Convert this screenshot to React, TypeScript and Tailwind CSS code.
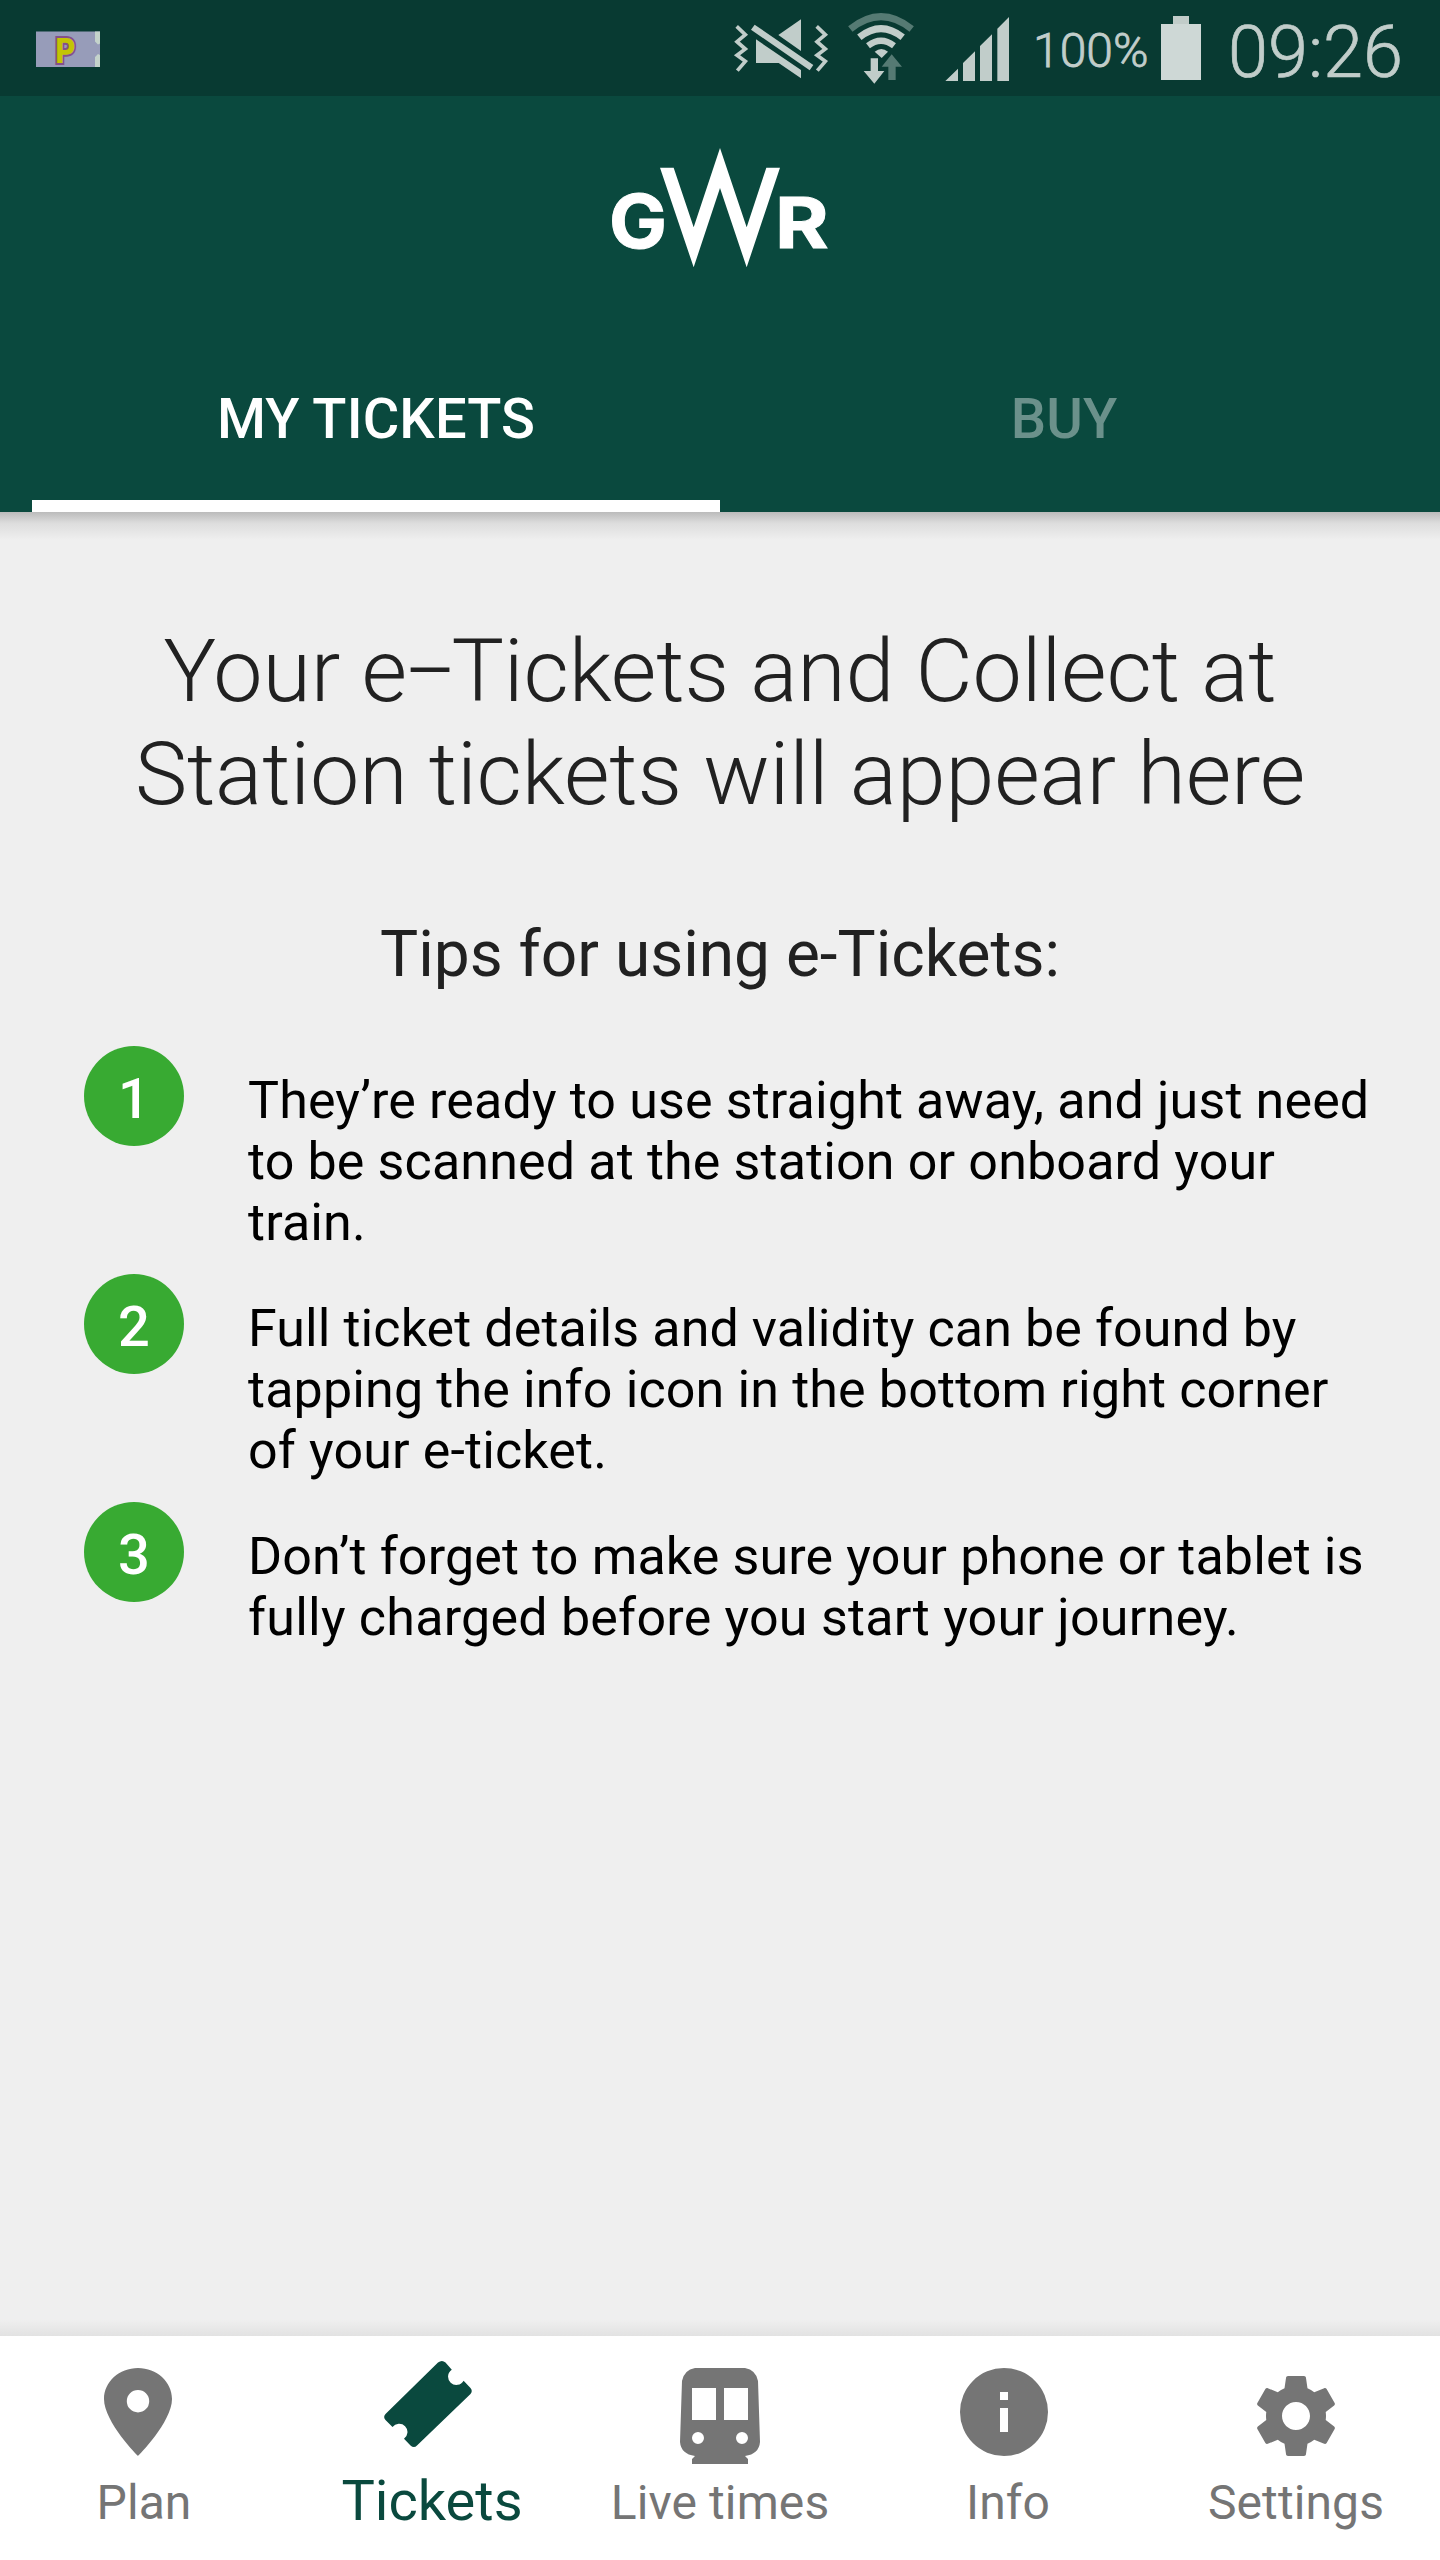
import type { ReactNode } from "react";

const GEAR =
  "M19.43 12.98c.04-.32.07-.64.07-.98s-.03-.66-.07-.98l2.11-1.65c.19-.15.24-.42.12-.64l-2-3.46c-.12-.22-.39-.3-.61-.22l-2.49 1c-.52-.4-1.08-.73-1.69-.98l-.38-2.65C14.46 2.18 14.25 2 14 2h-4c-.25 0-.46.18-.49.42l-.38 2.65c-.61.25-1.17.59-1.69.98l-2.49-1c-.23-.09-.49 0-.61.22l-2 3.46c-.13.22-.07.49.12.64l2.11 1.65c-.04.32-.07.65-.07.98s.03.66.07.98l-2.11 1.65c-.19.15-.24.42-.12.64l2 3.46c.12.22.39.3.61.22l2.49-1c.52.4 1.08.73 1.69.98l.38 2.65c.03.24.24.42.49.42h4c.25 0 .46-.18.49-.42l.38-2.65c.61-.25 1.17-.59 1.69-.98l2.49 1c.23.09.49 0 .61-.22l2-3.46c.12-.22.07-.49-.12-.64l-2.11-1.65zM12 15.5c-1.93 0-3.5-1.57-3.5-3.5s1.57-3.5 3.5-3.5 3.5 1.57 3.5 3.5-1.57 3.5-3.5 3.5z";

function StatusBar() {
  return (
    <div className="flex h-24 w-full shrink-0 bg-[#083a32] text-[#c1cdca]">
      <svg className="ml-9 h-24 w-16 shrink-0" viewBox="36 0 64 96">
        <rect x="36" y="31.5" width="64" height="35.5" fill="#979cb9" />
        <path d="M95 31.5h5v12l-2 1-3-3zM95 67h5V55l-2-1-3 3z" fill="#c4d3cb" />
        <text
          x="54.5"
          y="62.500"
          fontFamily="DejaVu Sans"
          fontWeight="700"
          fontSize="33"
          textLength="21"
          lengthAdjust="spacingAndGlyphs"
          fill="#c3c404"
          stroke="#84508a"
          strokeWidth="4"
          paintOrder="stroke"
        >
          P
        </text>
      </svg>
      <svg className="ml-[632px] h-24 w-[100px] shrink-0" viewBox="36 0 300 288" fill="currentColor">
        <path d="M50 79L76 104L51 125L76 147L51 166L76 184L52 212" fill="none" stroke="currentColor" strokeWidth="11" />
        <path d="M290 79L316 104L291 125L316 147L291 166L316 184L292 212" fill="none" stroke="currentColor" strokeWidth="11" />
        <path d="M104 74L280 195L269 211L93 89zM243 58V153L175 105zM108 118L243 210V235L176 189H108z" />
      </svg>
      <svg className="ml-[13px] h-24 w-[72px] shrink-0" viewBox="375 0 216 288" fill="none" stroke="currentColor">
        <path d="M391 87Q483 13 575 87" stroke="#557a73" strokeWidth="21" />
        <path d="M418 112Q483 60 548 112" strokeWidth="21" />
        <path d="M444 137Q483 107 522 137" strokeWidth="19" />
        <path d="M464 155Q484 139 504 155L485 174z" fill="currentColor" stroke="none" />
        <path d="M515 163L546 200H527V240H505V200H485z" fill="#557a73" stroke="none" />
        <path d="M452 175H474V213H493L463 251L431 213H452z" fill="currentColor" stroke="none" />
      </svg>
      <svg className="ml-[27px] h-24 w-[66px] shrink-0" viewBox="672 0 198 288" fill="currentColor">
        <path d="M676 243L714 206V243zM729 243V189L765 154V243zM780 243V138L816 103V243zM832 243V86L867 51V243z" />
      </svg>
      <div className="ml-[23px] w-[128px] shrink-0 pt-[21px] text-[48px] leading-[60px] font-light whitespace-nowrap [-webkit-text-stroke:0.8px_#c1cdca]">
        100%
      </div>
      <div className="flex w-10 shrink-0 flex-col items-center pt-4">
        <div className="h-2 w-4 bg-[#c1ccc9]" />
        <div className="h-14 w-10 bg-[#ced8d6]" />
      </div>
      <div className="ml-[27px] shrink-0 pt-[11px] text-[72px] leading-[84px] font-light whitespace-nowrap [-webkit-text-stroke:0.7px_#c1cdca]">
        09:26
      </div>
    </div>
  );
}

function Logo() {
  return (
    <svg className="h-[150px] w-[260px]" viewBox="0 0 780 450" fill="#fff" role="img" aria-label="GWR">
      <text
        x="57"
        y="353"
        fontFamily="Inter"
        fontWeight="700"
        fontSize="223"
        textLength="174"
        lengthAdjust="spacingAndGlyphs"
        stroke="#fff"
        strokeWidth="3"
      >
        G
      </text>
      <path d="M210 113H251L311 292L390 54L470 292L529 113H570L470 412L390 174L311 412z" />
      <text
        x="555"
        y="353"
        fontFamily="Inter"
        fontWeight="700"
        fontSize="212"
        textLength="161"
        lengthAdjust="spacingAndGlyphs"
        stroke="#fff"
        strokeWidth="3"
      >
        R
      </text>
    </svg>
  );
}

function Tip({ n, children }: { n: number; children: ReactNode }) {
  return (
    <li className="flex h-[228px]">
      <div className="flex size-[100px] shrink-0 items-center justify-center rounded-full bg-[#38aa32] pt-1.5 text-[56px] leading-none font-medium text-white">
        {n}
      </div>
      <p className="ml-16 pt-6 text-[52px] leading-[61px] tracking-[0.14px] whitespace-nowrap text-black">{children}</p>
    </li>
  );
}

function NavItem({ label, active, children }: { label: string; active?: boolean; children: ReactNode }) {
  return (
    <a className={active ? "flex w-72 flex-col items-center text-[#0a493e]" : "flex w-72 flex-col items-center text-[#757575]"}>
      <div className="flex h-[136px] items-start justify-center">{children}</div>
      <span
        className={
          active ? "text-[56px] leading-[58px] whitespace-nowrap" : "text-[48px] leading-[61px] tracking-[0.1px] whitespace-nowrap"
        }
      >
        {label}
      </span>
    </a>
  );
}

export default function App() {
  return (
    <div className="flex h-[2560px] w-[1440px] flex-col overflow-hidden bg-[#efefef] font-['Roboto',sans-serif]">
      <StatusBar />
      <header className="flex h-[416px] shrink-0 flex-col items-center bg-[#0a493e] pt-[34px]">
        <Logo />
        <nav className="mt-auto flex w-full px-8 text-[56px] leading-[66px] font-medium tracking-[0.15px]">
          <div className="flex h-[128px] w-[688px] flex-col items-center justify-between whitespace-nowrap text-white">
            <span className="mt-0.5">MY TICKETS</span>
            <div className="h-3 w-full bg-white" />
          </div>
          <div className="flex h-[128px] w-[688px] justify-center text-[#6b918b]">
            <span className="mt-0.5">BUY</span>
          </div>
        </nav>
      </header>
      <div className="h-7 shrink-0 bg-linear-to-b from-[#bbbbbb] via-[#dddddd] via-40% to-[#efefef]" />
      <main className="flex grow flex-col">
        <h1 className="mt-[79px] text-center text-[88px] leading-[103px] font-light tracking-[-0.13px] text-[#212121]">
          Your <span className="tracking-[-5px]">e</span>
          <span className="inline-block scale-x-[0.9] tracking-[-8px]">–</span>Tickets and Collect at
          <br />
          Station tickets will appear here
        </h1>
        <h2 className="mt-[92px] text-center text-[64px] leading-[76px] text-[#212121]">Tips for using e-Tickets:</h2>
        <ol className="mt-[53px] pl-[84px]">
          <Tip n={1}>
            They’re ready to use straight away, and just need
            <br />
            to be scanned at the station or onboard your
            <br />
            train.
          </Tip>
          <Tip n={2}>
            <span className="tracking-[0.09px]">Full ticket details and validity can be found by</span>
            <br />
            tapping the info icon in the bottom right corner
            <br />
            of your e-ticket.
          </Tip>
          <Tip n={3}>
            Don’t forget to make sure your phone or tablet is
            <br />
            <span className="tracking-[0.22px]">fully charged before you start your journey.</span>
          </Tip>
        </ol>
      </main>
      <div className="h-4 shrink-0 bg-linear-to-b from-[#efefef] to-[#e2e2e2]" />
      <footer className="flex h-56 shrink-0 bg-white">
        <NavItem label="Plan">
          <svg className="mt-8 mr-3 h-[88px] w-[68px]" viewBox="0 0 68 88" fill="currentColor">
            <path fillRule="evenodd" d="M34 0C15.200 0 0 13.800 0 31C0 54 34 88 34 88S68 54 68 31C68 13.800 52.800 0 34 0zM34 22a11.200 11.200 0 1 1 0 22.400a11.200 11.200 0 1 1 0-22.400z" />
          </svg>
        </NavItem>
        <NavItem label="Tickets" active>
          <svg className="mt-[25px] mr-2 h-[87px] w-[88px]" viewBox="0 0 88 87" fill="currentColor">
            <path d="M54 1.500Q58-1.500 61.500 1.500L67.800 8.700A8.300 8.300 0 1 0 79.600 19.700L86.500 27Q89 30 86.500 33L33 84.500Q30 87.500 26.500 84.500L20 77.700A8.300 8.300 0 1 0 8.500 66L1.500 59Q-1.200 56 1.500 53z" />
          </svg>
        </NavItem>
        <NavItem label="Live times">
          <svg className="mt-8 h-24 w-20" viewBox="0 0 80 96" fill="currentColor">
            <path fillRule="evenodd" d="M15 0H65Q76 2 78 13L80 74Q79 86 65 88L68 91V96H12V91L15 88Q1 86 0 74L2 13Q4 2 15 0zM12 20V52H36V20zM44 20V52H68V20zM18 64a6 6 0 1 0 0 12a6 6 0 1 0 0-12zM62 64a6 6 0 1 0 0 12a6 6 0 1 0 0-12z" />
          </svg>
        </NavItem>
        <NavItem label="Info">
          <svg className="mt-8 mr-2 size-[88px]" viewBox="0 0 88 88" fill="currentColor">
            <path fillRule="evenodd" d="M44 0a44 44 0 1 0 0 88a44 44 0 1 0 0-88zM40 24h8v8h-8zM40 40h8v24h-8z" />
          </svg>
        </NavItem>
        <NavItem label="Settings">
          <svg className="mt-10 size-20" viewBox="2 2 20 20" fill="currentColor">
            <path d={GEAR} />
          </svg>
        </NavItem>
      </footer>
    </div>
  );
}
